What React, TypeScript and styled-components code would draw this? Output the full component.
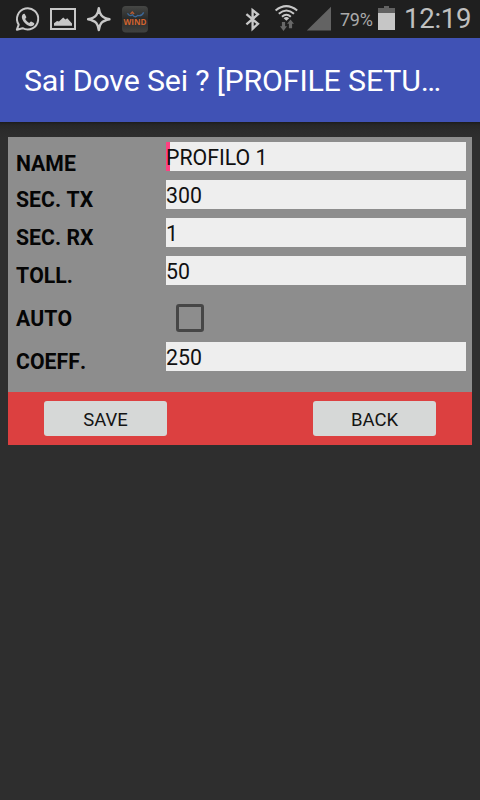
import React from "react";
import styled, { createGlobalStyle } from "styled-components";

const GlobalStyle = createGlobalStyle`
  * { box-sizing: border-box; }
  html, body { margin: 0; padding: 0; background: #2e2e2e; }
  body { font-family: Roboto, sans-serif; }
`;

const Screen = styled.div`
  width: 480px;
  height: 800px;
  overflow: hidden;
  display: flex;
  flex-direction: column;
  background: #2e2e2e;
`;

const StatusBar = styled.header`
  height: 38px;
  flex: none;
  display: flex;
  justify-content: space-between;
  background: #1f1f1f;
  color: #c0c0c0;
`;

const StatusIcons = styled.svg`
  display: block;
  flex: none;
`;

const StatusGroup = styled.div`
  display: flex;
`;

const Percent = styled.span`
  width: 38px;
  font-size: 18px;
  line-height: 40px;
  letter-spacing: -0.3px;
  color: #aaa;
  white-space: nowrap;
`;

const Clock = styled.time`
  width: 76px;
  font-size: 27.6px;
  line-height: 38px;
  letter-spacing: -0.3px;
  white-space: nowrap;
`;

const AppBar = styled.div`
  height: 84px;
  flex: none;
  padding: 0 24px;
  background: #4052b5;
`;

const Title = styled.h1`
  margin: 0;
  font-size: 30.4px;
  font-weight: 400;
  line-height: 85px;
  letter-spacing: -0.2px;
  color: #fff;
  white-space: nowrap;
`;

const Content = styled.main`
  flex: 1;
  padding: 15px 8px 0;
  background: linear-gradient(#1c1c1c 0, #272727 3px, #2b2b2b 8px, #2e2e2e 15px);
`;

const Form = styled.section`
  height: 255px;
  padding: 5px 6px 0 8px;
  background: #8d8d8d;
`;

const Row = styled.div<{ $height?: number }>`
  display: grid;
  grid-template-columns: 150px 300px;
  height: ${(p) => p.$height ?? 38}px;
`;

const Label = styled.label<{ $top?: number }>`
  padding-top: ${(p) => p.$top ?? 5}px;
  font-size: 21.2px;
  font-weight: 700;
  font-kerning: none;
  letter-spacing: 0.05px;
  line-height: 30px;
  color: #050505;
`;

const Field = styled.div<{ $focused?: boolean }>`
  height: 29px;
  font-size: 21.3px;
  line-height: 31px;
  color: #111;
  background: ${(p) =>
    p.$focused ? "linear-gradient(90deg, #ff4081 4px, #eee 4px)" : "#eee"};
`;

const CheckBox = styled.span`
  width: 28px;
  height: 28px;
  margin: 10px 0 0 10px;
  border: 3px solid #464646;
  border-radius: 3px;
`;

const Actions = styled.footer`
  height: 53px;
  padding: 9px 36px;
  display: flex;
  justify-content: space-between;
  background: #dc4040;
`;

const Button = styled.button`
  width: 123px;
  height: 35px;
  padding: 2px 0 0;
  border: 0;
  border-radius: 3px;
  background: #d6d8d7;
  color: #141414;
  font: 400 18.5px/35px Roboto, sans-serif;
`;

const LeftIcons = () => (
  <StatusIcons width="160" height="38" fill="none" stroke="#c8c8c8">
    <path
      d="M16.9 29.7 L18.7 24.6 A10.6 10.6 0 1 1 22.6 28.2 Z"
      strokeWidth="2"
      strokeLinejoin="round"
    />
    <path
      d="M22.5 14.8c.7-1 1.9-1.3 2.4-.5l1.4 2.7c.3.8-.8 1.4-1.1 2 .9 1.8 2.3 3.1 4.1 3.9.7-.4 1.2-1.7 1.9-1.4l2.8 1.4c.6.5.2 1.9-.7 2.6-1.8 1.4-4.4.5-6.8-1.1-2.3-1.7-4-4-4.5-6.1-.3-1.4-.1-2.6.5-3.5z"
      fill="#c8c8c8"
      stroke="none"
    />
    <rect x="51" y="9" width="24" height="20" strokeWidth="2" />
    <path
      d="M54 25.7v-2.5l3-2.2 2 .6 4.2-4.1 2.2 2 1.9-1.3 4.7 5.3v2.2z"
      fill="#c8c8c8"
      stroke="none"
    />
    <path
      d="M98.8 8.2C99.6 13.9 101.2 17.6 109.5 19.2 101.2 20.8 99.6 24.1 98.8 30 98 24.1 96.4 20.8 88.1 19.2 96.4 17.6 98 13.9 98.8 8.2z"
      strokeWidth="2.4"
      strokeLinejoin="round"
    />
    <defs>
      <linearGradient id="tile" x1="0" y1="0" x2="0" y2="1">
        <stop offset="0" stopColor="#464745" />
        <stop offset=".5" stopColor="#292a29" />
        <stop offset="1" stopColor="#414240" />
      </linearGradient>
    </defs>
    <rect x="122" y="6" width="26" height="26.5" rx="4" fill="url(#tile)" stroke="none" />
    <path
      d="M127.5 13.2c1.3 2.5 3.3 3.1 5 1.6 1.8 2.4 3.4 2.6 5.2.6 2.3.7 4.7-.3 6-3"
      stroke="#3d6796"
      strokeWidth="1.3"
    />
    <path d="M130.5 14l1.8-2 1.8 2" stroke="#b65b31" strokeWidth="1.3" />
    <text
      x="123.5"
      y="25"
      textLength="23"
      lengthAdjust="spacingAndGlyphs"
      fill="#d0632f"
      stroke="none"
      fontFamily="Open Sans, sans-serif"
      fontSize="8.8"
      fontWeight="700"
    >
      WIND
    </text>
  </StatusIcons>
);

const SignalIcons = () => (
  <StatusIcons width="100" height="38" viewBox="240 0 100 38" fill="none">
    <path
      d="M246.4 14.2l11.6 9.6-5.4 5V10.1l5.4 4.3-11.6 10"
      stroke="#c8c8c8"
      strokeWidth="2.3"
    />
    <g stroke="#c8c8c8" strokeWidth="2">
      <path d="M275.6 10.5Q286.3 1.8 297.2 10.5" />
      <path d="M278.8 13.8Q286.4 7.2 294 13.8" />
      <path d="M282 16.8Q286.4 12.8 290.8 16.8" />
    </g>
    <path d="M283.6 18.2q2.8-2.2 5.6 0l-2.8 2.5z" fill="#c8c8c8" />
    <path
      d="M281.9 22h3.2v4.2h1.9l-3.5 4.7-3.5-4.7h1.9zM288.9 28.3v-4.5h-1.8l3.4-4.2 3.5 4.2h-1.9v4.5z"
      fill="#686868"
    />
    <path d="M306.8 30.6L331 6.8v23.8z" fill="#636363" />
  </StatusIcons>
);

const BatteryIcon = () => (
  <StatusIcons width="26" height="38" viewBox="378 0 26 38">
    <path d="M378 13V8h6V6h5v2h6v5z" fill="#626262" />
    <path d="M378 13h17v17h-17z" fill="#c6c6c6" />
  </StatusIcons>
);

type Entry = { label: string; value: string; focused?: boolean; top?: number };

const entries: Entry[] = [
  { label: "NAME", value: "PROFILO 1", focused: true, top: 7 },
  { label: "SEC. TX", value: "300" },
  { label: "SEC. RX", value: "1" },
  { label: "TOLL.", value: "50" },
];

export default function App() {
  return (
    <>
      <GlobalStyle />
      <Screen>
        <StatusBar>
          <LeftIcons />
          <StatusGroup>
            <SignalIcons />
            <Percent>79%</Percent>
            <BatteryIcon />
            <Clock>12:19</Clock>
          </StatusGroup>
        </StatusBar>
        <AppBar>
          <Title>Sai Dove Sei ? [PROFILE SETU…</Title>
        </AppBar>
        <Content>
          <Form>
            {entries.map((e) => (
              <Row key={e.label}>
                <Label $top={e.top}>{e.label}</Label>
                <Field $focused={e.focused}>{e.value}</Field>
              </Row>
            ))}
            <Row $height={48}>
              <Label $top={10}>AUTO</Label>
              <CheckBox role="checkbox" aria-checked={false} />
            </Row>
            <Row>
              <Label>COEFF.</Label>
              <Field>250</Field>
            </Row>
          </Form>
          <Actions>
            <Button>SAVE</Button>
            <Button>BACK</Button>
          </Actions>
        </Content>
      </Screen>
    </>
  );
}
